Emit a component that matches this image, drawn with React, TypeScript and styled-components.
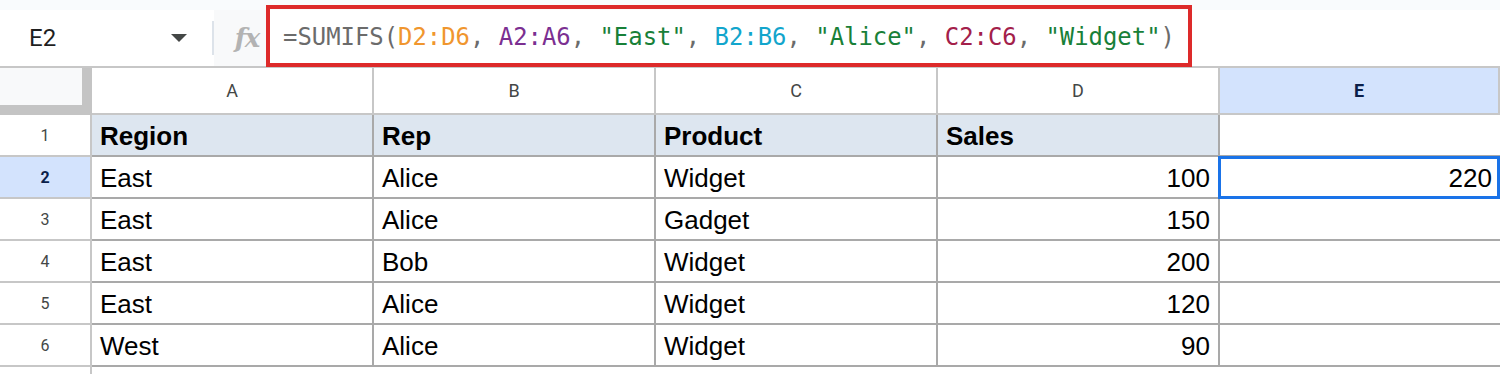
import React from "react";
import styled, { createGlobalStyle } from "styled-components";

const Global = createGlobalStyle`
  html, body { margin: 0; padding: 0; background: #ffffff; }
  body { font-family: "Liberation Sans", Arial, sans-serif; overflow: hidden; }
  * { box-sizing: border-box; }
`;

const Page = styled.div`
  width: 1500px;
  height: 374px;
  overflow: hidden;
  display: flex;
  flex-direction: column;
  background: #ffffff;
  & > * { flex-shrink: 0; }
`;

const TopStrip = styled.div`
  height: 10px;
  background: #f9fbfd;
`;

const FormulaBar = styled.div`
  position: relative;
  height: 58px;
  display: flex;
  align-items: stretch;
  border-bottom: 2px solid #c7c7c7;
  background: #ffffff;
`;

const NameBox = styled.div`
  width: 212px;
  display: flex;
  align-items: center;
  padding-left: 29px;
  font-family: Roboto, "Liberation Sans", sans-serif;
  font-size: 24px;
  color: #1f1f1f;
`;

const NameText = styled.span`
  flex: 1;
`;

const Caret = styled.span`
  width: 0;
  height: 0;
  margin-right: 25px;
  border-left: 8px solid transparent;
  border-right: 8px solid transparent;
  border-top: 8px solid #444746;
`;

const Divider = styled.div`
  align-self: center;
  width: 2px;
  height: 34px;
  background: #dde3ea;
`;

const FxArea = styled.div`
  width: 52px;
  display: flex;
  align-items: center;
  justify-content: center;
  padding-left: 14px;
  background: #f8f9fa;
  font-family: "DejaVu Serif", "Liberation Serif", serif;
  font-style: italic;
  font-weight: bold;
  font-size: 26px;
  color: #b3b3b3;
  letter-spacing: -1px;
`;

const FormulaInput = styled.div`
  flex: 1;
  display: flex;
  align-items: center;
  padding-left: 17px;
  padding-bottom: 3px;
  font-family: "DejaVu Sans Mono", "Liberation Mono", monospace;
  font-size: 23.9px;
  white-space: pre;
  color: #6b6b6b;
`;

const Tok = styled.span<{ $c: string }>`
  color: ${(p) => p.$c};
`;

const Highlight = styled.div`
  position: absolute;
  left: 266px;
  top: -5px;
  width: 926px;
  height: 62px;
  border: 4px solid #dd2a2a;
  pointer-events: none;
`;

const Grid = styled.div`
  display: grid;
  grid-template-columns: 92px 282px 282px 282px 282px 280px;
  grid-auto-rows: 42px;
  grid-template-rows: 47px;
`;

const Corner = styled.div`
  background: #f8f9fa;
  border-right: 10px solid #c4c4c4;
  border-bottom: 10px solid #c4c4c4;
`;

const ColHead = styled.div<{ $active?: boolean }>`
  display: flex;
  align-items: center;
  justify-content: center;
  border-right: 2px solid #c7c7c7;
  border-bottom: 2px solid #c7c7c7;
  background: ${(p) => (p.$active ? "#d3e3fd" : "#ffffff")};
  color: ${(p) => (p.$active ? "#0b1f4a" : "#444746")};
  font-family: Roboto, "Liberation Sans", sans-serif;
  font-size: 18px;
  font-weight: ${(p) => (p.$active ? 700 : 400)};
`;

const RowHead = styled.div<{ $active?: boolean; $last?: boolean }>`
  display: flex;
  align-items: center;
  justify-content: center;
  border-right: 2px solid #c7c7c7;
  border-bottom: ${(p) => (p.$last ? "none" : "2px solid #c7c7c7")};
  background: ${(p) => (p.$active ? "#d3e3fd" : "#ffffff")};
  color: ${(p) => (p.$active ? "#0b1f4a" : "#444746")};
  font-family: Roboto, "Liberation Sans", sans-serif;
  font-size: 16px;
  font-weight: ${(p) => (p.$active ? 700 : 400)};
`;

const Cell = styled.div<{
  $head?: boolean;
  $num?: boolean;
  $selected?: boolean;
  $blank?: boolean;
}>`
  position: relative;
  display: flex;
  align-items: center;
  justify-content: ${(p) => (p.$num ? "flex-end" : "flex-start")};
  padding: 2px 8px 0 8px;
  border-right: ${(p) => (p.$blank ? "none" : "2px solid #a9a9a9")};
  border-bottom: ${(p) => (p.$blank ? "none" : "2px solid #a9a9a9")};
  background: ${(p) => (p.$head ? "#dde6f0" : "#ffffff")};
  font-family: "Liberation Sans", Arial, sans-serif;
  font-size: 26px;
  font-weight: ${(p) => (p.$head ? 700 : 400)};
  color: #000000;

  ${(p) =>
    p.$selected &&
    `
    &::after {
      content: "";
      position: absolute;
      left: -2px;
      top: -1px;
      right: 0;
      bottom: -2px;
      border: 3px solid #1a73e8;
    }
  `}
`;

const LastCell = styled(Cell)`
  border-right: none;
`;

const columns = ["A", "B", "C", "D", "E"];

const rows: (string | number)[][] = [
  ["Region", "Rep", "Product", "Sales", ""],
  ["East", "Alice", "Widget", 100, 220],
  ["East", "Alice", "Gadget", 150, ""],
  ["East", "Bob", "Widget", 200, ""],
  ["East", "Alice", "Widget", 120, ""],
  ["West", "Alice", "Widget", 90, ""],
];

export default function App() {
  return (
    <>
      <Global />
      <Page>
        <TopStrip />
        <FormulaBar>
          <NameBox>
            <NameText>E2</NameText>
            <Caret />
          </NameBox>
          <Divider />
          <FxArea>fx</FxArea>
          <FormulaInput>
            <Tok $c="#6b6b6b">=SUMIFS(</Tok>
            <Tok $c="#f0962e">D2:D6</Tok>
            <Tok $c="#6b6b6b">, </Tok>
            <Tok $c="#7b2f91">A2:A6</Tok>
            <Tok $c="#6b6b6b">, </Tok>
            <Tok $c="#188038">"East"</Tok>
            <Tok $c="#6b6b6b">, </Tok>
            <Tok $c="#12a5cc">B2:B6</Tok>
            <Tok $c="#6b6b6b">, </Tok>
            <Tok $c="#188038">"Alice"</Tok>
            <Tok $c="#6b6b6b">, </Tok>
            <Tok $c="#a3204a">C2:C6</Tok>
            <Tok $c="#6b6b6b">, </Tok>
            <Tok $c="#188038">"Widget"</Tok>
            <Tok $c="#6b6b6b">)</Tok>
          </FormulaInput>
          <Highlight />
        </FormulaBar>
        <Grid>
          <Corner />
          {columns.map((c) => (
            <ColHead key={c} $active={c === "E"}>
              {c}
            </ColHead>
          ))}
          {rows.map((r, i) => (
            <React.Fragment key={i}>
              <RowHead $active={i === 1}>{i + 1}</RowHead>
              {r.map((v, j) => {
                const isNum = typeof v === "number";
                const props = {
                  $head: i === 0 && j < 4,
                  $num: isNum,
                  $selected: i === 1 && j === 4,
                };
                return j === 4 ? (
                  <LastCell key={j} {...props}>
                    {v}
                  </LastCell>
                ) : (
                  <Cell key={j} {...props}>
                    {v}
                  </Cell>
                );
              })}
            </React.Fragment>
          ))}
          <RowHead $last />
          {columns.map((c) => (
            <Cell key={c} $blank />
          ))}
        </Grid>
      </Page>
    </>
  );
}
